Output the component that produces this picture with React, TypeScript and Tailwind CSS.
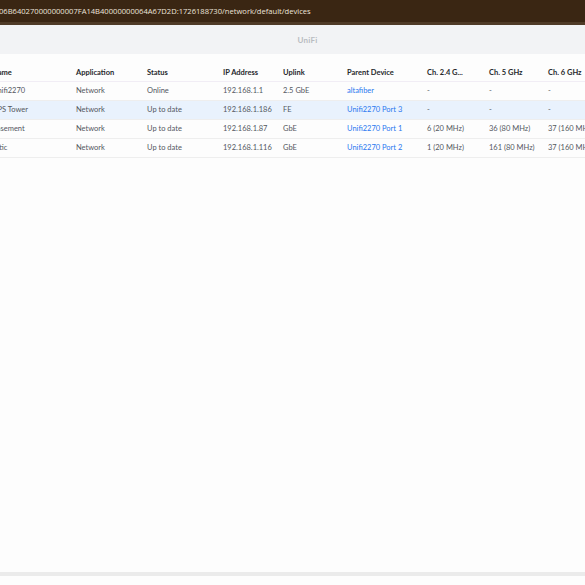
const url =
  "06B640270000000007FA14B40000000064A67D2D:1726188730/network/default/devices";

type Row = {
  name: string;
  app: string;
  status: string;
  ip: string;
  uplink: string;
  parent: string;
  ch24: string;
  ch5: string;
  ch6: string;
  selected?: boolean;
};

const rows: Row[] = [
  { name: "Unifi2270", app: "Network", status: "Online", ip: "192.168.1.1", uplink: "2.5 GbE", parent: "altafiber", ch24: "-", ch5: "-", ch6: "-" },
  { name: "UPS Tower", app: "Network", status: "Up to date", ip: "192.168.1.186", uplink: "FE", parent: "Unifi2270 Port 3", ch24: "-", ch5: "-", ch6: "-", selected: true },
  { name: "Basement", app: "Network", status: "Up to date", ip: "192.168.1.87", uplink: "GbE", parent: "Unifi2270 Port 1", ch24: "6 (20 MHz)", ch5: "36 (80 MHz)", ch6: "37 (160 MHz)" },
  { name: "Attic", app: "Network", status: "Up to date", ip: "192.168.1.116", uplink: "GbE", parent: "Unifi2270 Port 2", ch24: "1 (20 MHz)", ch5: "161 (80 MHz)", ch6: "37 (160 MHz)" },
];

const headers = ["Name", "Application", "Status", "IP Address", "Uplink", "Parent Device", "Ch. 2.4 G...", "Ch. 5 GHz", "Ch. 6 GHz"];

const cols = "grid grid-cols-[84px_71px_76px_60px_64px_80px_62px_59px_90px]";

export default function App() {
  return (
    <div className="flex h-[585px] w-[585px] flex-col overflow-hidden bg-[#fdfdfd] font-['Lato',sans-serif]">
      {/* browser address bar */}
      <div className="flex h-[22px] items-center whitespace-nowrap bg-[#3a2613] pt-[2px] text-[7.6px] text-[#ece4da] font-['Open_Sans',sans-serif]">
        <span className="-ml-[1px]">{url}</span>
      </div>
      <div className="h-[3px] bg-[#4f3b27]" />

      {/* app header */}
      <div className="flex h-[29px] items-center justify-center bg-[#f2f3f5] pl-[30px]">
        <span className="text-[8px] font-bold tracking-wide text-[#b9bcc1]">UniFi</span>
      </div>

      {/* device table */}
      <div className="flex-1 overflow-hidden">
        <div className="-ml-[8px] w-[656px] text-[7.5px]">
          <div className={`${cols} h-[28px] items-end border-b border-[#f1edf5] pb-[3px] font-bold text-[#26282c]`}>
            {headers.map((h) => (
              <div key={h} className="whitespace-nowrap leading-[10px]">
                {h}
              </div>
            ))}
          </div>
          {rows.map((r) => (
            <div
              key={r.name}
              className={`${cols} h-[19px] items-center border-b border-[#eeeeee] text-[#53575e] ${r.selected ? "bg-[#e9f2fd]" : ""}`}
            >
              <div className="whitespace-nowrap">{r.name}</div>
              <div className="whitespace-nowrap">{r.app}</div>
              <div className="whitespace-nowrap">{r.status}</div>
              <div className="whitespace-nowrap">{r.ip}</div>
              <div className="whitespace-nowrap">{r.uplink}</div>
              <div className="whitespace-nowrap text-[#2a78f0]">{r.parent}</div>
              <div className="whitespace-nowrap">{r.ch24}</div>
              <div className="whitespace-nowrap">{r.ch5}</div>
              <div className="whitespace-nowrap">{r.ch6}</div>
            </div>
          ))}
        </div>
      </div>

      {/* horizontal scrollbar */}
      <div className="mb-[9px] h-[4px] bg-[#ebebeb]" />
    </div>
  );
}
